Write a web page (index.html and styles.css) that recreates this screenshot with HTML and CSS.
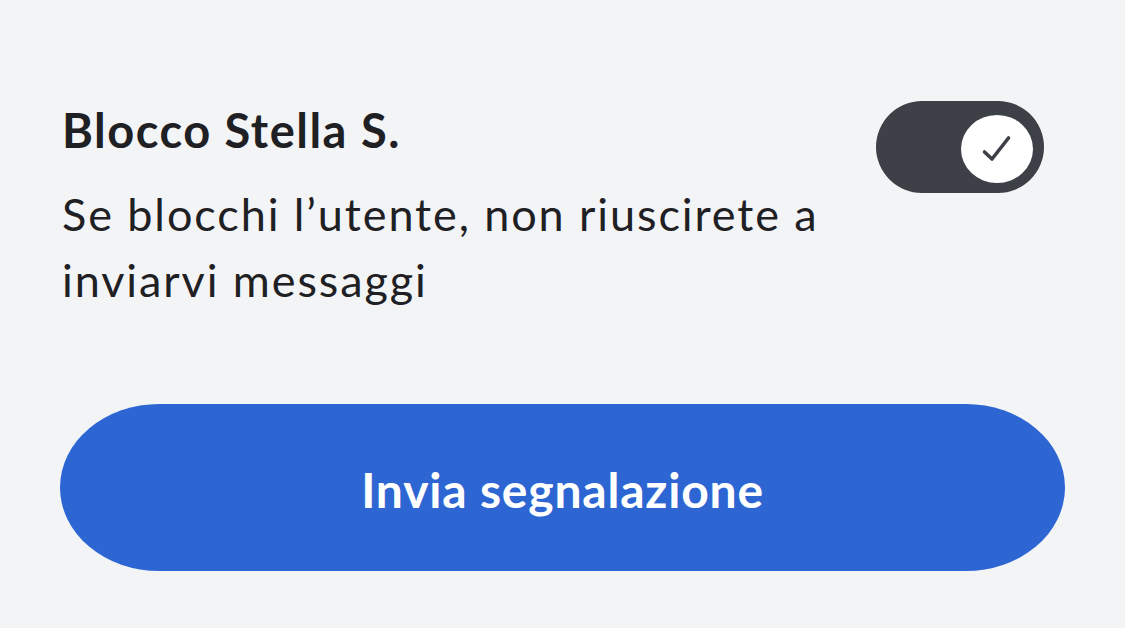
FILE: index.html
```html
<!DOCTYPE html>
<html lang="it">
<head>
<meta charset="utf-8">
<link rel="stylesheet" href="styles.css">
</head>
<body>
<main class="page">
  <section class="row">
    <div class="text">
      <h1 class="title">Blocco Stella S.</h1>
      <p class="desc">Se blocchi l’utente, non riuscirete a inviarvi messaggi</p>
    </div>
    <div class="toggle" role="switch" aria-checked="true">
      <span class="knob">
        <svg viewBox="0 0 40 40" width="40" height="40" aria-hidden="true">
          <path d="M7.5 23 L15 30 L31.5 9" fill="none" stroke="#3d4047" stroke-width="3.6" stroke-linecap="round" stroke-linejoin="round"/>
        </svg>
      </span>
    </div>
  </section>
  <button class="send">Invia segnalazione</button>
</main>
</body>
</html>
```

FILE: styles.css
```css
html, body {
  margin: 0;
  padding: 0;
  background: #f3f4f6;
}
body {
  font-family: Lato, "Open Sans", "Noto Sans", sans-serif;
  color: #1f2023;
}
.page {
  width: 1125px;
  height: 628px;
  box-sizing: border-box;
  padding: 101px 60px 0 60px;
  display: flex;
  flex-direction: column;
}
.row {
  display: flex;
  justify-content: space-between;
  align-items: flex-start;
}
.text {
  padding-left: 2px;
}
.title {
  margin: 1px 0 0 0;
  font-size: 47px;
  line-height: 56px;
  font-weight: 700;
  letter-spacing: 1.5px;
}
.desc {
  margin: 23px 0 0 0;
  width: 805px;
  font-size: 45px;
  line-height: 66px;
  font-weight: 400;
  letter-spacing: 1.9px;
}
.toggle {
  width: 168px;
  height: 92px;
  margin-right: 21px;
  border-radius: 46px;
  background: #3d4047;
  display: flex;
  align-items: center;
  justify-content: flex-end;
  padding: 0 11px 0 0;
  box-sizing: border-box;
}
.knob {
  width: 72px;
  height: 68px;
  margin-top: 4px;
  border-radius: 50%;
  background: #ffffff;
  display: flex;
  align-items: center;
  justify-content: center;
}
.knob svg {
  display: block;
  width: 40px;
  height: 40px;
}
.send {
  margin-top: 91px;
  width: 1005px;
  height: 167px;
  border: none;
  border-radius: 100px / 84px;
  background: #2d66d3;
  color: #ffffff;
  font-family: Lato, "Open Sans", "Noto Sans", sans-serif;
  font-size: 48px;
  font-weight: 700;
  letter-spacing: 0.8px;
  padding: 4px 0 0 0;
  display: flex;
  align-items: center;
  justify-content: center;
}
```
